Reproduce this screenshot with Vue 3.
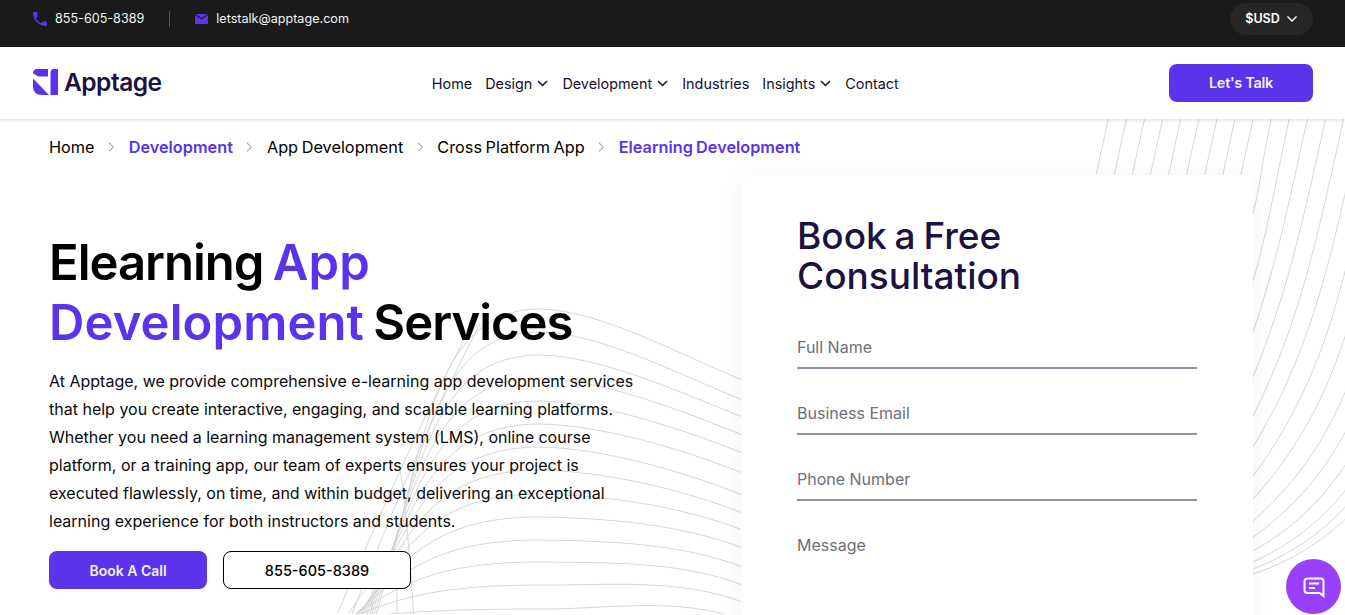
<script setup>
// hero background line art
const waveRows = [
  [310, 380], [333, 400], [356, 417], [379, 435], [402, 453], [425, 473], [448, 495],
  [471, 513], [495, 530], [518, 548], [541, 567], [563, 585], [586, 602], [610, 620]
]
const waveLines = waveRows.map(([peakY, rightY], i) => {
  const startX = 375 - i * 2.5
  const c1y = 620 - (620 - peakY) * 0.55
  return `M${startX} 620 C${startX + 50} ${c1y} 430 ${peakY} 540 ${peakY} C600 ${peakY + 1} 680 ${rightY - 24} 745 ${rightY + 2}`
})
// the steep strands that cross at the bottom left
waveLines.push('M335 620C370 540 420 420 470 330')
waveLines.push('M350 620C385 530 425 430 480 325')
waveLines.push('M400 470C406 510 410 560 414 620')
waveLines.push('M372 580V620M397 575V620M345 620C365 590 385 560 405 545')

const topStep = 18.1
const fanLines = []
// these run behind the card, only the part above it shows
for (let i = 0; i < 9; i++) {
  const x = 1108.3 + i * topStep
  fanLines.push(`M${x} 120 L${x - 14} 184`)
}
const edgeRows = [215, 282, 333, 378, 417, 448, 477, 500, 522, 538, 552, 563, 570, 575]
edgeRows.forEach((y0, i) => {
  const topX = 1108.3 + (i + 9) * topStep
  const angle = (78 - 60 * Math.exp(-(575 - y0) / 110)) * Math.PI / 180
  const d = Math.hypot(topX - 1253, y0 - 120) * 0.33
  const len = (y0 - 120) * 0.45
  const c1x = 1253 + d * Math.cos(angle)
  const c1y = y0 - d * Math.sin(angle)
  fanLines.push(`M1253 ${y0} C${c1x} ${c1y} ${topX - 0.22 * len} ${120 + len} ${topX} 120`)
})

const navItems = [
  { label: 'Home' },
  { label: 'Design', caret: true },
  { label: 'Development', caret: true },
  { label: 'Industries' },
  { label: 'Insights', caret: true },
  { label: 'Contact' }
]

const crumbs = [
  { label: 'Home' },
  { label: 'Development', active: true },
  { label: 'App Development' },
  { label: 'Cross Platform App' },
  { label: 'Elearning Development', active: true }
]

const fields = ['Full Name', 'Business Email', 'Phone Number']
</script>

<template>
  <div class="page">
    <div class="topbar">
      <div class="contact">
        <a class="contact-item">
          <svg width="14" height="14" viewBox="3 3 18 18" fill="#5a33ea"><path d="M6.620 10.790c1.440 2.830 3.760 5.140 6.590 6.590l2.200-2.200c.27-.27.67-.36 1.020-.24 1.120.37 2.330.57 3.570.57.55 0 1 .45 1 1V20c0 .55-.45 1-1 1-9.390 0-17-7.610-17-17 0-.55.45-1 1-1h3.500c.55 0 1 .45 1 1 0 1.250.2 2.450.57 3.570.11.35.03.74-.25 1.020l-2.200 2.200z"/></svg>
          855-605-8389
        </a>
        <span class="divider"></span>
        <a class="contact-item">
          <svg width="13" height="10" viewBox="0 0 13 10"><path fill="#5a33ea" d="M0 1 6.500 5.200 13 1V10H0zM.4 0H12.600L6.500 3.900z"/></svg>
          letstalk@apptage.com
        </a>
      </div>
      <div class="currency">
        $USD
        <svg width="12" height="8" viewBox="0 0 12 8" fill="none" stroke="#fff" stroke-width="1.400"><path d="M1.500 1.500 6 6l4.500-4.500"/></svg>
      </div>
    </div>

    <header class="navbar">
      <div class="logo">
        <svg width="25" height="26" viewBox="0 0 25 26" fill="#5a33ea">
          <path d="M0 4.500Q0 0 4.500 0H15V7.500H5.500Z"/>
          <path d="M0 9.500 16 26H9Q0 26 0 17Z"/>
          <path d="M17.500 4Q17.500 0 21 0H25V26H17.500Z"/>
        </svg>
        <span>Apptage</span>
      </div>
      <nav class="nav">
        <a v-for="item in navItems" :key="item.label" class="nav-link">
          {{ item.label }}
          <svg v-if="item.caret" class="caret" width="11" height="7" viewBox="0 0 11 7" fill="none" stroke="#14102b" stroke-width="1.500"><path d="M1 1l4.500 4.500L10 1"/></svg>
        </a>
      </nav>
      <button class="talk-btn">Let's Talk</button>
    </header>

    <main class="hero">
      <svg class="line-art" width="1345" height="495" viewBox="0 120 1345 495" fill="none" stroke="#d6d6d6" stroke-width="1">
        <path v-for="(d, i) in waveLines" :key="'w' + i" :d="d" />
        <path v-for="(d, i) in fanLines" :key="'f' + i" :d="d" />
      </svg>

      <div class="breadcrumb">
        <template v-for="(c, i) in crumbs" :key="c.label">
          <svg v-if="i > 0" class="sep" width="7" height="10" viewBox="0 0 7 10" fill="none" stroke="#8b8b8b" stroke-width="1"><path d="M1 .8 5.500 5 1 9.200"/></svg>
          <span :class="{ active: c.active }">{{ c.label }}</span>
        </template>
      </div>

      <div class="hero-grid">
        <section class="intro">
          <h1>Elearning <em>App<br>Development</em> Services</h1>
          <p>At Apptage, we provide comprehensive e-learning app development services<br>that help you create interactive, engaging, and scalable learning platforms.<br>Whether you need a learning management system (LMS), online course<br>platform, or a training app, our team of experts ensures your project is<br>executed flawlessly, on time, and within budget, delivering an exceptional<br>learning experience for both instructors and students.</p>
          <div class="actions">
            <button class="btn-primary">Book A Call</button>
            <button class="btn-outline">855-605-8389</button>
          </div>
        </section>

        <section class="form-card">
          <h2>Book a Free<br>Consultation</h2>
          <div v-for="f in fields" :key="f" class="field">{{ f }}</div>
          <div class="field message">Message</div>
        </section>
      </div>
    </main>

    <button class="chat-btn" aria-label="Chat">
      <svg width="24" height="24" viewBox="0 0 24 24" fill="none" stroke="#fff" stroke-width="2"><path d="M5.500 3.500H18.500Q21.500 3.500 21.500 6.500V21L17.500 18H5.500Q2.500 18 2.500 15V6.500Q2.500 3.500 5.500 3.500Z"/><path d="M7 8.500H17M7 13H13"/></svg>
    </button>
  </div>
</template>

<style>
html, body {
  margin: 0;
  overflow: hidden;
  background: #fff;
}
</style>

<style scoped>
* {
  box-sizing: border-box;
}
.page {
  height: 615px;
  overflow: hidden;
  position: relative;
  font-family: Inter, "Liberation Sans", sans-serif;
  color: #000;
}
.topbar {
  height: 47px;
  background: #1a1a1a;
  display: flex;
  justify-content: space-between;
  align-items: center;
  padding: 0 32px 10px 33px;
  color: #f4f4f4;
  font-size: 12.6px;
}
.contact {
  display: flex;
  align-items: center;
}
.contact-item {
  display: flex;
  align-items: center;
  gap: 8px;
}
.divider {
  width: 1px;
  height: 16px;
  background: #555;
  margin: 0 25px;
}
.currency {
  width: 83px;
  height: 32px;
  border-radius: 16px;
  background: #262626;
  display: flex;
  align-items: center;
  justify-content: center;
  gap: 6px;
  font-weight: 600;
  font-size: 12.5px;
  color: #fff;
}
.navbar {
  height: 72px;
  padding: 0 32px 0 33px;
  display: flex;
  align-items: center;
  justify-content: space-between;
  background: #fff;
  box-shadow: 0 1px 4px rgba(0, 0, 0, 0.14);
  position: relative;
  z-index: 2;
}
.logo {
  display: flex;
  align-items: center;
  gap: 6px;
  font-size: 24.500px;
  font-weight: 600;
  color: #1b1240;
  letter-spacing: -0.5px;
  margin-bottom: 3px;
}
.nav {
  display: flex;
  align-items: center;
  gap: 13px;
}
.nav-link {
  display: flex;
  align-items: center;
  gap: 5px;
  font-size: 14.400px;
  color: #14102b;
}
.caret {
  margin-right: 1px;
}
.talk-btn {
  width: 144px;
  height: 38px;
  border: none;
  border-radius: 8px;
  background: #5a33ea;
  color: #f3efff;
  font: 600 14.500px Inter, sans-serif;
  letter-spacing: -0.3px;
  margin-bottom: 1px;
}
.hero {
  position: relative;
  height: 496px;
  padding: 0 49px;
}
.line-art {
  position: absolute;
  top: 0;
  left: 0;
}
.breadcrumb {
  position: relative;
  height: 56px;
  display: flex;
  align-items: center;
  font-size: 16.300px;
  word-spacing: -1px;
}
.sep {
  margin: 0 13.500px;
}
.breadcrumb .active {
  color: #5a33ea;
  font-weight: 600;
}
.hero-grid {
  position: relative;
  display: flex;
  justify-content: space-between;
  padding-right: 43px;
}
.intro {
  width: 640px;
  padding-top: 58px;
}
h1 {
  margin: 0 0 14px;
  font-size: 49px;
  line-height: 60px;
  font-weight: 600;
  letter-spacing: -1px;
  word-spacing: -2px;
  color: #000;
}
h1 em {
  font-style: normal;
  letter-spacing: 0.1px;
  color: #5a33ea;
}
.intro p {
  margin: 0;
  font-size: 16px;
  line-height: 28px;
  white-space: nowrap;
  color: #0a0a0a;
}
.actions {
  display: flex;
  gap: 16px;
  margin-top: 16px;
}
.btn-primary,
.btn-outline {
  height: 38px;
  border-radius: 8px;
  font: 500 14.500px Inter, sans-serif;
}
.btn-primary {
  width: 158px;
  border: none;
  background: #5a33ea;
  color: #f3efff;
  font-weight: 600;
  font-size: 14px;
}
.btn-outline {
  width: 188px;
  background: #fff;
  border: 1px solid #000;
  color: #000;
}
.form-card {
  width: 512px;
  height: 500px;
  padding: 41px 56px 0;
  background: #fff;
  border-radius: 10px;
  box-shadow: 0 4px 24px rgba(0, 0, 0, 0.05);
}
h2 {
  margin: 0 0 7px;
  font-size: 37px;
  line-height: 40px;
  font-weight: 500;
  word-spacing: -2px;
  color: #1b1240;
}
.field {
  width: 400px;
  height: 66px;
  display: flex;
  align-items: flex-end;
  padding-bottom: 10px;
  border-bottom: 2px solid #9391a0;
  font-size: 16px;
  color: #6f6f78;
}
.field.message {
  height: 64px;
  border-bottom: none;
}
.chat-btn {
  position: absolute;
  left: 1286px;
  top: 559px;
  width: 55px;
  height: 55px;
  border: none;
  border-radius: 50%;
  background: #9a3ffb;
  display: flex;
  align-items: center;
  justify-content: center;
  padding: 0;
  z-index: 5;
}
</style>
